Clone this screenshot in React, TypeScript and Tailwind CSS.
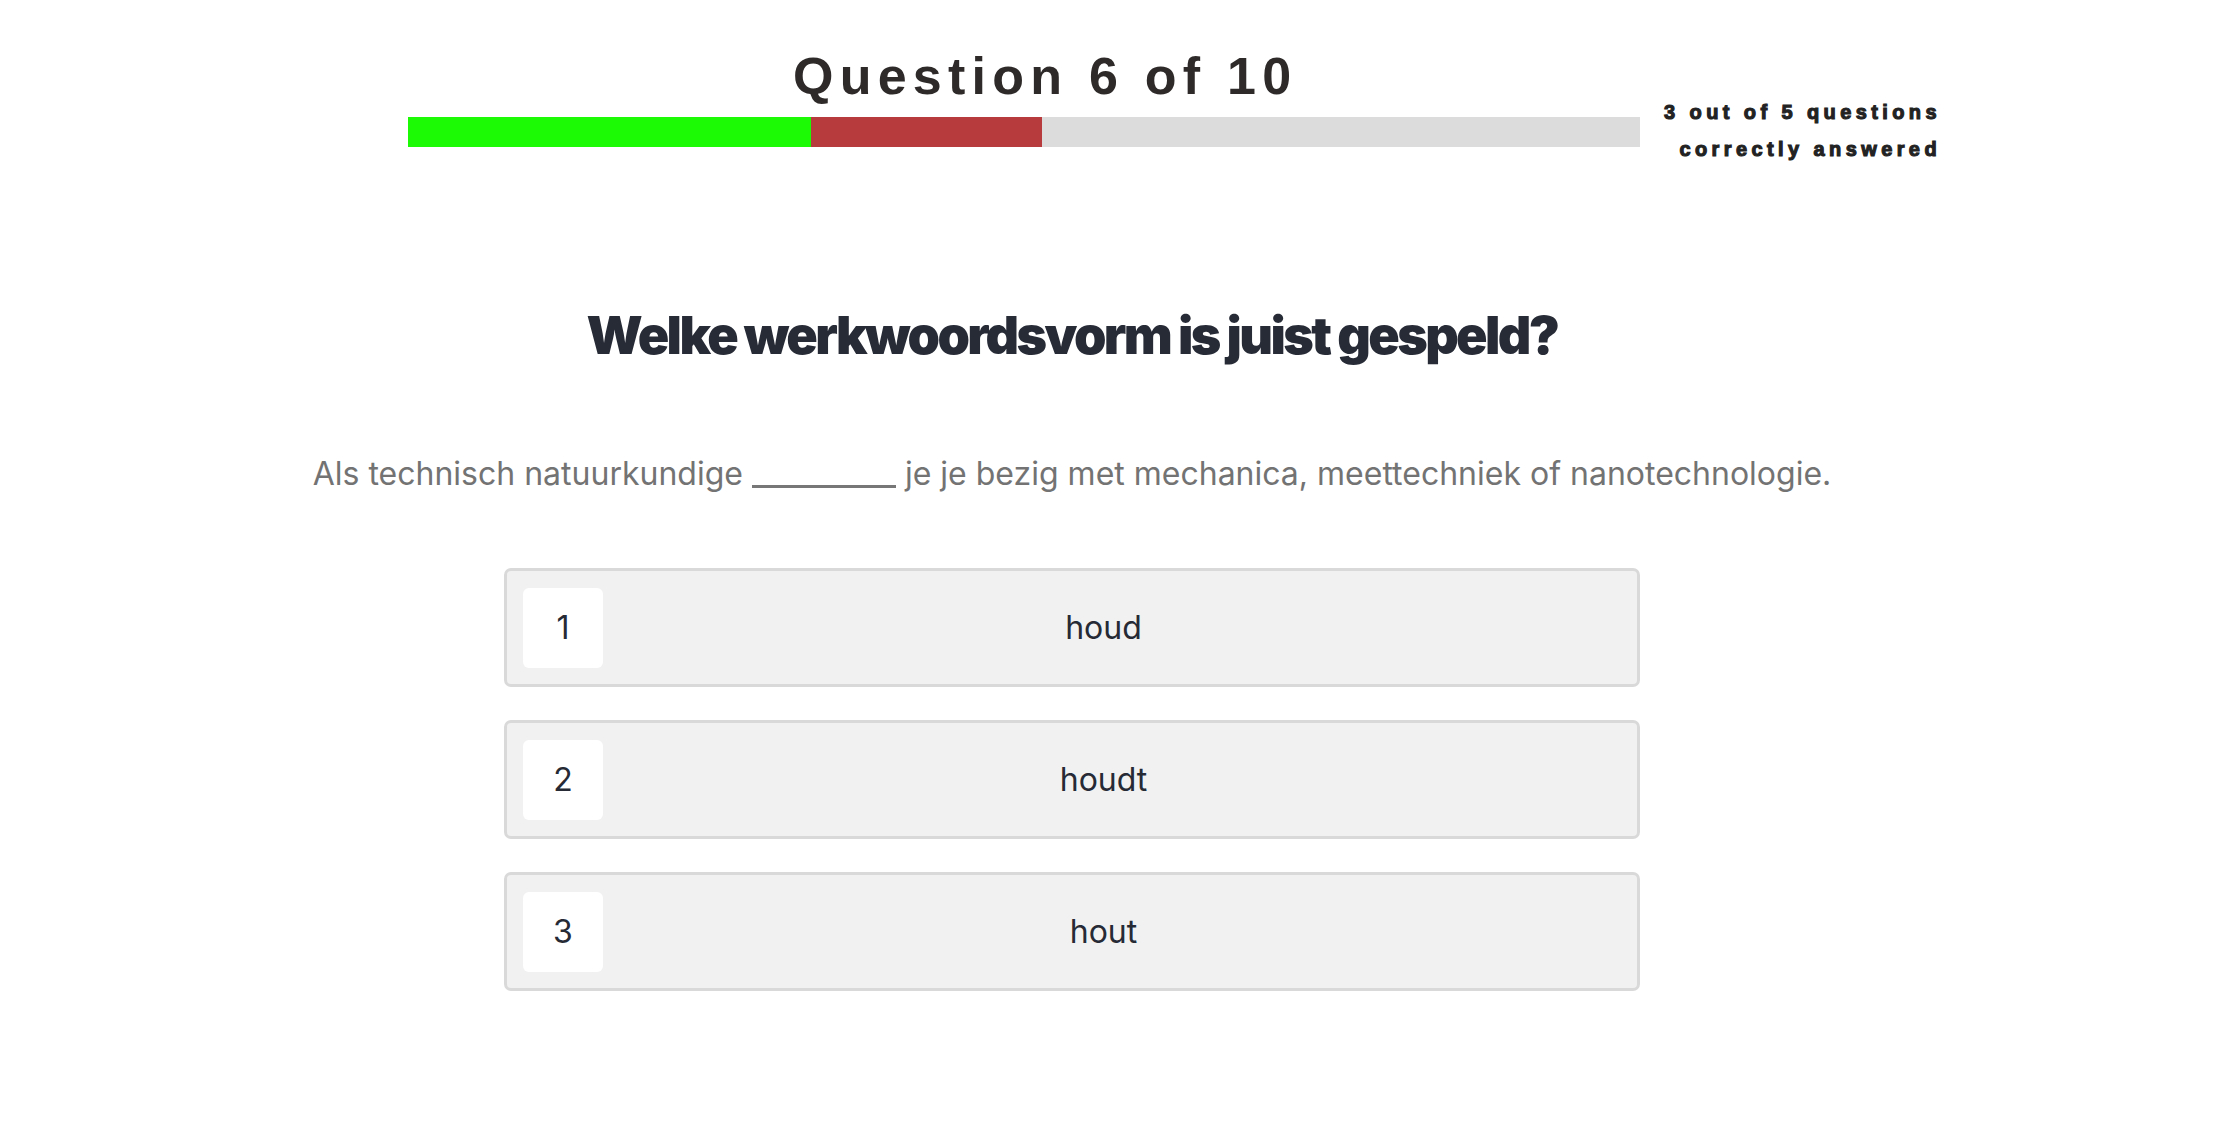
const options = [
  { id: 1, label: "houd" },
  { id: 2, label: "houdt" },
  { id: 3, label: "hout" },
];

export default function App() {
  return (
    <div className="min-h-screen bg-white font-['Inter',sans-serif]">
      {/* progress header */}
      <header className="flex items-start pt-[50px] pl-[408px]">
        <div className="w-[1232px]">
          <h1 className="pl-[385px] font-['Liberation_Sans',Arial,sans-serif] text-[52px] leading-none font-bold tracking-[0.12em] text-[#2e2a29] whitespace-nowrap">
            Question 6 of 10
          </h1>
          <div className="mt-[15px] flex h-[30px] w-full bg-[#dcdcdc]">
            <div className="w-[403px] bg-[#1dfa06]" />
            <div className="w-[231px] bg-[#b73b3d]" />
          </div>
        </div>
        <div className="ml-[20px] w-[281px] pt-[44px] text-right font-['Liberation_Sans',Arial,sans-serif] text-[20px] leading-[37px] font-bold tracking-[0.22em] text-[#222] [-webkit-text-stroke:1.1px_#222] whitespace-nowrap">
          <div>3 out of 5 questions</div>
          <div>correctly answered</div>
        </div>
      </header>

      <main className="ml-[272px] w-[1600px] pt-[142px] text-center">
        <h2 className="text-[52px] leading-none font-black tracking-[-0.05em] text-[#272b36]">
          Welke werkwoordsvorm is juist gespeld?
        </h2>
        <p className="mt-[96px] text-[32px] leading-none text-[#737373]">
          Als technisch natuurkundige{" "}
          <span className="inline-block w-[144px] border-b-[3px] border-[#777777] align-[-3px]" />{" "}
          je je bezig met mechanica, meettechniek of nanotechnologie.
        </p>

        <div className="mx-auto mt-[78px] flex w-[1136px] flex-col gap-[33px]">
          {options.map((opt) => (
            <div
              key={opt.id}
              className="flex h-[119px] items-center rounded-[7px] border-[3px] border-[#d9d9d9] bg-[#f1f1f1] px-[16px] text-[32px] text-[#262a35]"
            >
              <div className="flex h-[80px] w-[80px] items-center justify-center rounded-[6px] bg-white">
                {opt.id}
              </div>
              <div className="flex-1 pr-[17px] text-center">{opt.label}</div>
            </div>
          ))}
        </div>
      </main>
    </div>
  );
}
